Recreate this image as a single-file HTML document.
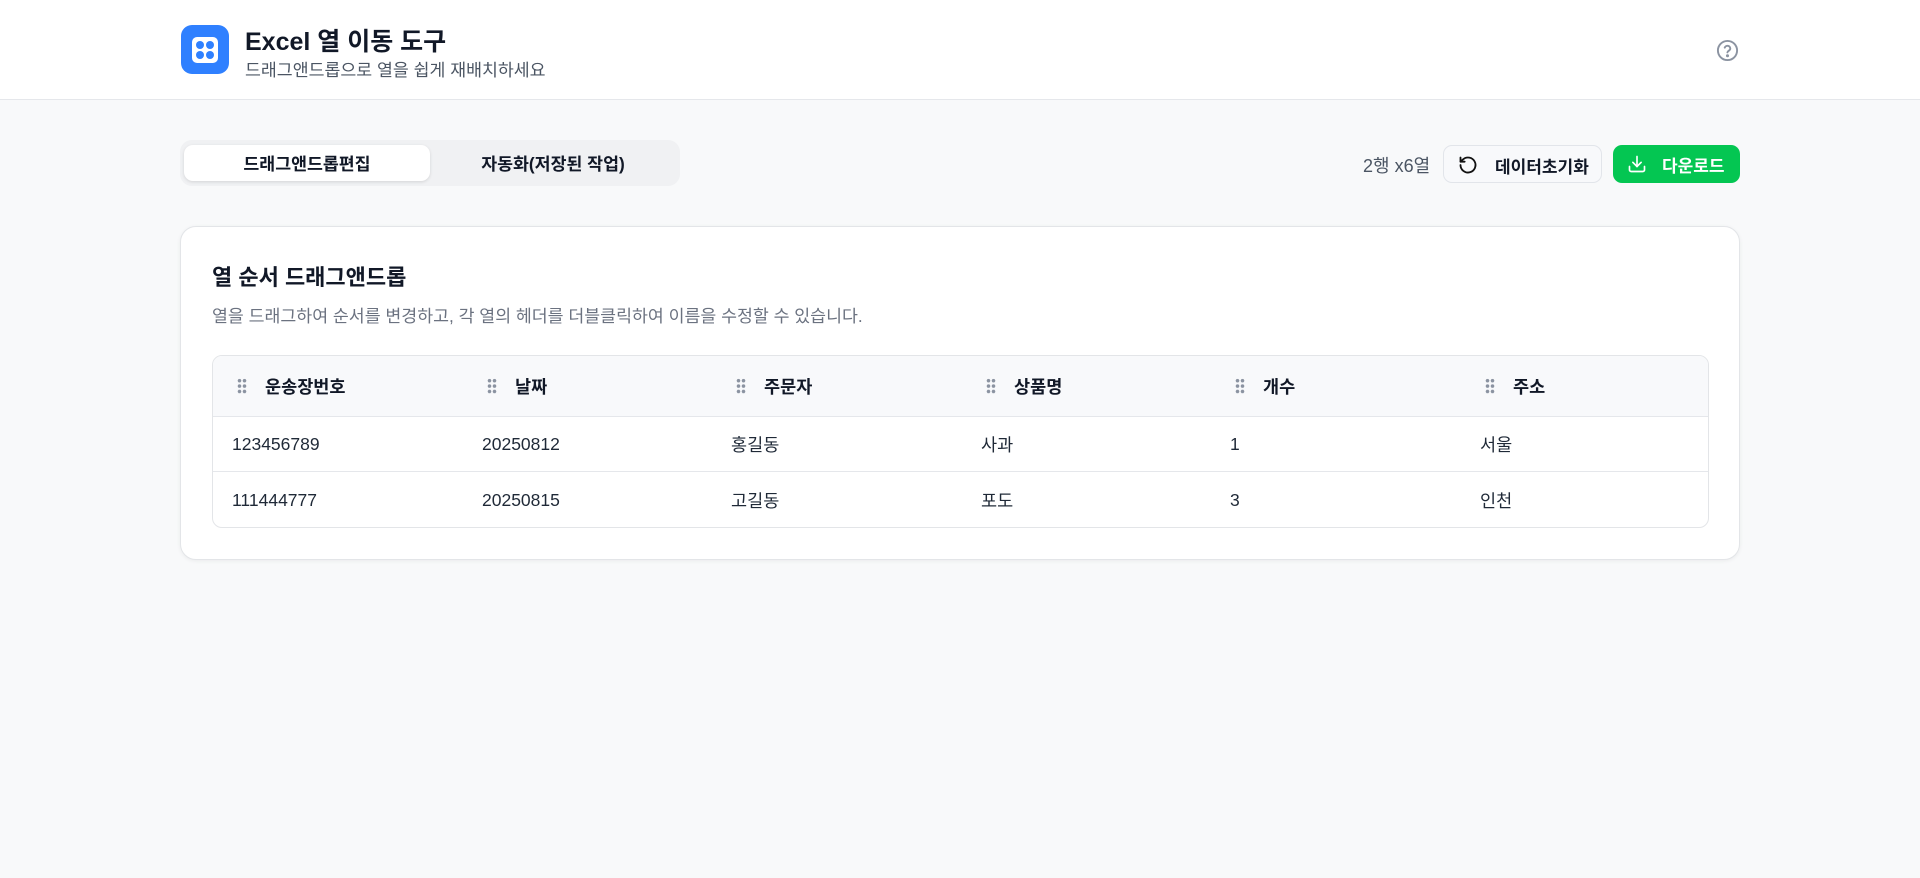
<!DOCTYPE html>
<html><head><meta charset="utf-8"><style>
*{box-sizing:border-box;margin:0;padding:0}
body{width:1920px;height:878px;background:#f8f9fa;font-family:"Liberation Sans","Noto Sans CJK KR",sans-serif;color:#111827;position:relative;overflow:hidden}
.hdr{position:absolute;left:0;top:0;width:1920px;height:100px;background:#fff;border-bottom:1px solid #e5e7eb}
.logo{position:absolute;left:181px;top:25px;width:48px;height:49px;background:#2f80ff;border-radius:11px}
.logo .in{position:absolute;left:11px;top:12px;width:26px;height:26px;background:#fff;border-radius:5px}
.logo .d{position:absolute;width:8px;height:8px;border-radius:50%;background:#2f80ff}
.t1{position:absolute;left:245px;top:22px;font-size:25px;font-weight:bold;color:#111827}
.t2{position:absolute;left:245px;top:56px;font-size:17.3px;color:#4b5563}
.help{position:absolute;left:1716px;top:39px}
.tabs{position:absolute;left:180px;top:140px;width:500px;height:46px;background:#f0f1f3;border-radius:12px}
.tab{position:absolute;top:5px;height:36px;line-height:38px;text-align:center;font-size:17.3px;font-weight:bold;color:#111827}
.tab.a{left:4px;width:246px;background:#fff;border-radius:9px;box-shadow:0 1px 3px rgba(0,0,0,.12)}
.cnt{position:absolute;left:1363px;top:152px;font-size:18px;color:#4b5563}
.btn{position:absolute;top:145px;height:38px;border-radius:9px;font-size:17px;font-weight:bold}
.reset{left:1443px;width:159px;background:#f8f9fb;border:1px solid #e2e5ea;color:#111827}
.dl{left:1613px;width:127px;background:#04c652;color:#fff}
.btn svg{position:absolute;left:14px;top:9px}
.btn span{position:absolute;top:7px}
.card{position:absolute;left:180px;top:226px;width:1560px;height:334px;background:#fff;border:1px solid #e3e5e8;border-radius:16px;box-shadow:0 1px 4px rgba(0,0,0,.06)}
.ct{position:absolute;left:31px;top:33px;font-size:22px;font-weight:bold;color:#111827}
.cd{position:absolute;left:31px;top:75px;font-size:17.3px;color:#6b7280}
.tbl{position:absolute;left:31px;top:128px;width:1497px;height:173px;border:1px solid #e3e5e8;border-radius:10px;overflow:hidden}
.row{position:absolute;left:0;width:100%;border-bottom:1px solid #e5e7eb}
.hrow{top:0;height:61px;background:#f8f9fb}
.r1{top:61px;height:55px}.r2{top:116px;height:56px;border-bottom:none}
.c{position:absolute;top:0;height:100%;display:flex;align-items:center;font-size:17.5px;color:#1f2937}
.hrow .c{font-weight:bold;color:#111827;font-size:17.5px}
.grip{display:inline-block;width:10px;height:16px;margin-right:18px;background:radial-gradient(circle,#8b93a1 1.6px,transparent 2px) 0 0/5px 5.4px}
</style></head><body>
<div class="hdr">
<div class="logo"><div class="in"><div class="d" style="left:4px;top:4px"></div><div class="d" style="left:14px;top:4px"></div><div class="d" style="left:4px;top:14px"></div><div class="d" style="left:14px;top:14px"></div></div></div>
<div class="t1">Excel 열 이동 도구</div>
<div class="t2">드래그앤드롭으로 열을 쉽게 재배치하세요</div>
<svg class="help" width="23" height="23" viewBox="0 0 24 24" fill="none" stroke="#8b93a1" stroke-width="2" stroke-linecap="round"><circle cx="12" cy="12" r="10"/><path d="M9.1 9a3 3 0 0 1 5.8 1c0 2-3 2.5-3 4"/><circle cx="12" cy="17.5" r=".6" fill="#8b93a1"/></svg>
</div>
<div class="tabs"><div class="tab a">드래그앤드롭편집</div><div class="tab" style="left:250px;width:246px">자동화(저장된 작업)</div></div>
<div class="cnt">2행 x6열</div>
<div class="btn reset"><svg width="20" height="20" viewBox="0 0 24 24" fill="none" stroke="#111" stroke-width="2.2" stroke-linecap="round" stroke-linejoin="round"><path d="M3 12a9 9 0 1 0 3-6.7L3 8"/><path d="M3 3v5h5"/></svg><span style="left:51px">데이터초기화</span></div>
<div class="btn dl"><svg width="20" height="20" viewBox="0 0 24 24" fill="none" stroke="#fff" stroke-width="2" stroke-linecap="round" stroke-linejoin="round"><path d="M21 15v4a2 2 0 0 1-2 2H5a2 2 0 0 1-2-2v-4"/><path d="M7 10l5 5 5-5"/><path d="M12 15V3"/></svg><span style="left:49px">다운로드</span></div>
<div class="card">
<div class="ct">열 순서 드래그앤드롭</div>
<div class="cd">열을 드래그하여 순서를 변경하고, 각 열의 헤더를 더블클릭하여 이름을 수정할 수 있습니다.</div>
<div class="tbl">
<div class="row hrow">
<div class="c" style="left:24px"><i class="grip"></i>운송장번호</div>
<div class="c" style="left:274px"><i class="grip"></i>날짜</div>
<div class="c" style="left:523px"><i class="grip"></i>주문자</div>
<div class="c" style="left:773px"><i class="grip"></i>상품명</div>
<div class="c" style="left:1022px"><i class="grip"></i>개수</div>
<div class="c" style="left:1272px"><i class="grip"></i>주소</div>
</div>
<div class="row r1">
<div class="c" style="left:19px">123456789</div><div class="c" style="left:269px">20250812</div><div class="c" style="left:518px">홍길동</div><div class="c" style="left:768px">사과</div><div class="c" style="left:1017px">1</div><div class="c" style="left:1267px">서울</div>
</div>
<div class="row r2">
<div class="c" style="left:19px">111444777</div><div class="c" style="left:269px">20250815</div><div class="c" style="left:518px">고길동</div><div class="c" style="left:768px">포도</div><div class="c" style="left:1017px">3</div><div class="c" style="left:1267px">인천</div>
</div>
</div>
</div>
</body></html>
